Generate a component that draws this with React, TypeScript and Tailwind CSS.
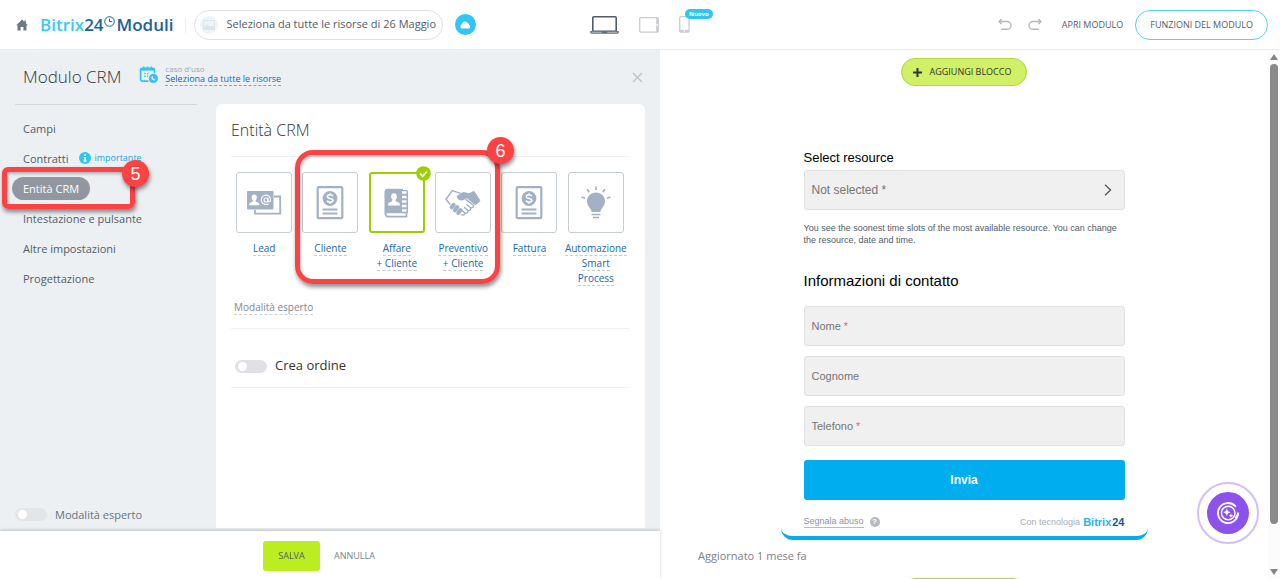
import React, { FC, ReactNode, useState } from "react";
import clsx from "clsx";

const BadgeNumber: FC<{ children: ReactNode; className?: string }> = ({
  children,
  className,
}) => (
  <span
    className={clsx(
      "absolute flex size-[27px] items-center justify-center rounded-full bg-[#fb4344] font-['Liberation_Sans',sans-serif] text-lg leading-none text-white shadow-[1px_3px_4px_rgba(0,0,0,0.45)]",
      className,
    )}
  >
    {children}
  </span>
);

const HomeIcon = () => (
  <svg width="12" height="12" viewBox="0 0 12 12" fill="#6f7883">
    <path d="M6 .4 8.4 2.7V1.4h1.5v2.8L11.8 6.2h-1.3v4.6q0 .6-.6.6H7.4V7.9H4.6v3.5H2.1q-.6 0-.6-.6V6.2H.2z" />
  </svg>
);

const ClockIcon = () => (
  <svg
    width="11"
    height="11"
    viewBox="0 0 11 11"
    fill="none"
    stroke="#1c6299"
    className="mb-1.5"
  >
    <circle cx="5.5" cy="5.5" r="4.8" />
    <path d="M5.5 2.6v3h2.7" />
  </svg>
);

const CalendarIcon = () => (
  <svg width="20" height="18" viewBox="0 0 20 18" fill="none">
    <path
      d="M9.5 15.2H3.2q-1.6 0-1.6-1.6V4q0-1.6 1.6-1.6h10.6q1.6 0 1.6 1.6v3"
      stroke="#36c2f0"
      strokeWidth="1.7"
    />
    <path d="M1.6 2.4h13.8v2.2H1.6z" fill="#36c2f0" />
    <path
      d="M4.8.4v2.6M8.6.4v2.6M12.3.4v2.6"
      stroke="#36c2f0"
      strokeWidth="1.6"
    />
    <path
      d="M5.2 6.8h1.5v1.4H5.2zM8.1 6.800h1.5v1.4H8.1zM5.200 9.600h1.500v1.400H5.200zM8.100 9.600h1v1.400h-1z"
      fill="#36c2f0"
    />
    <circle cx="14.4" cy="12.4" r="4.6" fill="#36c2f0" />
    <path d="M13.2 10.2v2.4l2.6 1.6" stroke="#fff" strokeWidth="1.2" />
  </svg>
);

const LaptopIcon = () => (
  <svg width="29" height="18" viewBox="0 0 29 18" fill="none">
    <rect
      x="2.8"
      y=".8"
      width="23.4"
      height="14.4"
      rx="1"
      stroke="#525c69"
      strokeWidth="1.6"
    />
    <path d="M.3 15h28.4v1.3q0 1.5-1.5 1.5H1.8q-1.5 0-1.5-1.5z" fill="#656f7b" />
    <path d="M1.6 16.3h10.2M17.2 16.3h10.2" stroke="#d5d8dc" strokeWidth=".7" />
  </svg>
);

const TabletIcon = () => (
  <svg width="20" height="16" viewBox="0 0 20 16" fill="none">
    <rect
      x=".7"
      y=".7"
      width="18.6"
      height="14.4"
      rx="1"
      stroke="#c9ccd1"
      strokeWidth="1.3"
    />
    <path d="M18.2 1v14" stroke="#c9ccd1" strokeWidth="2" />
    <circle cx="18.2" cy="8" r=".9" fill="#fff" />
  </svg>
);

const PhoneIcon = () => (
  <svg width="11" height="17" viewBox="0 0 11 17" fill="none">
    <rect
      x=".7"
      y=".7"
      width="9.4"
      height="15.4"
      rx="1"
      stroke="#c9ccd1"
      strokeWidth="1.3"
    />
    <path d="M1 14.9h9" stroke="#c9ccd1" strokeWidth="2" />
    <circle cx="5.4" cy="14.9" r=".8" fill="#fff" />
  </svg>
);

const UndoIcon: FC<{ flip?: boolean }> = ({ flip }) => (
  <svg
    width="14"
    height="13"
    viewBox="0 0 14 13"
    fill="none"
    stroke="#b4b9bf"
    strokeWidth="1.4"
    className={flip ? "-scale-x-100" : ""}
  >
    <path d="M1.4 3.5h7.700a3.900 3.900 0 0 1 0 7.800H3.200" />
    <path d="M3.500 1 1.200 3.500l2.300 2.500" />
  </svg>
);

const LeadIcon = () => (
  <svg width="36" height="26" viewBox="0 0 36 26" fill="none">
    <path
      d="M28 6.5h6.2V23.7H9V20"
      stroke="#a3b1c7"
      strokeWidth="1.8"
    />
    <rect x="1" y="1" width="26.5" height="18.5" rx="1" fill="#a3b1c7" />
    <path
      d="M8.2 4.6c1.7 0 2.7 1.2 2.6 3-.1 1.400-.6 2.300-1.100 2.800v1.300l2.800 1.100q1.100.5 1.100 2.500H2.900q0-2 1.100-2.500l2.800-1.100v-1.300c-.6-.5-1.100-1.400-1.100-2.800-.1-1.800.8-3 2.500-3z"
      fill="#fff"
    />
    <circle cx="20" cy="10" r="2" stroke="#fff" strokeWidth="1.1" />
    <path
      d="M22 7.800v2.700c0 2 2.600 1.700 2.600-.8a4.700 4.700 0 1 0-2 4"
      stroke="#fff"
      strokeWidth="1.100"
    />
  </svg>
);

const InvoiceIcon = () => (
  <svg width="28" height="34" viewBox="0 0 28 34" fill="none">
    <rect
      x="1.700"
      y="1.200"
      width="24.600"
      height="31"
      rx="1"
      stroke="#a3b1c7"
      strokeWidth="2.200"
    />
    <circle cx="14" cy="12.500" r="7.400" fill="#a3b1c7" />
    <path
      d="M16.800 10.200c-.5-1-1.500-1.400-2.800-1.400-1.500 0-2.700.6-2.700 1.800 0 2.700 5.600 1 5.600 3.700 0 1.300-1.300 1.900-2.900 1.900-1.400 0-2.500-.5-3-1.600M14 7.200v1.700M14 16.100v1.700"
      stroke="#fff"
      strokeWidth="1.500"
    />
    <path d="M6.500 23.500h15M6.500 27.500h15" stroke="#a3b1c7" strokeWidth="2" />
  </svg>
);

const ContactIcon = () => (
  <svg width="26" height="30" viewBox="0 0 26 30" fill="none">
    <path
      d="M1.500 3v23q0 2.600 2.600 2.600h18.400V25.500"
      stroke="#a3b1c7"
      strokeWidth="1.600"
    />
    <path
      d="M.7 3Q.7.7 3 .7h16v24.500H3.800q-1.800 0-1.800 1.400H.7z"
      fill="#a3b1c7"
    />
    <path
      d="M19 2h3.500q1.500 0 1.500 1.500V25.500H19z"
      fill="#a3b1c7"
    />
    <path
      d="M18 4.500h4.500M18 9h4.500M18 13.500h4.500M18 18h4.500M18 22.500h4.500"
      stroke="#fff"
      strokeWidth="2.600"
    />
    <path
      d="M10 5.300c1.900 0 3 1.300 2.900 3.200-.1 1.500-.6 2.500-1.200 3v1.800l3 1.100q1.300.6 1.300 3.200H4q0-2.600 1.300-3.200l3-1.100v-1.800c-.6-.5-1.100-1.500-1.200-3-.1-1.900 1-3.200 2.900-3.200z"
      fill="#fff"
    />
  </svg>
);

const HandshakeIcon = () => (
  <svg width="36" height="28" viewBox="0 0 36 28" fill="none">
    <path
      d="M15.500 4.400 7.200 1.600 1 10.300l4.200 5.200"
      stroke="#a3b1c7"
      strokeWidth="1.500"
    />
    <path
      d="M11.500 7.200 17 3.600q1.400-.9 3-.4l3.500 1q2.200-.2 4.400-1.900 1-.7 1.700.3l5.500 8.300q.5 1-.3 1.700l-3.600 3.200q-.9.600-1.900-.2l-7.500-6.300-3.400 1.600c-2.400 1.200-5.600.4-6.900-3.700z"
      fill="#a3b1c7"
    />
    <path
      d="m6.600 18.300 2-2.500M9.800 21.300l2.500-3.300M13.200 24l2.100-2.800"
      stroke="#a3b1c7"
      strokeWidth="4"
      strokeLinecap="round"
    />
    <path
      d="M16.600 25.700c1.600.9 3.500-.1 3.200-1.700 2 .7 3.600-.7 3-2.400 2.200.3 3.500-1.200 2.700-2.800 2.400.2 3.700-1.300 2.600-2.900L21 10.600M19.800 24l-2.600-2.500M22.800 21.600l-3.200-3M25.500 18.800l-3.500-3.100"
      stroke="#a3b1c7"
      strokeWidth="1.400"
      strokeLinecap="round"
    />
  </svg>
);

const BulbIcon = () => (
  <svg width="30" height="34" viewBox="0 0 30 34" fill="none">
    <path
      d="M15 6.600c5.200 0 9 3.800 9 8.700 0 3-1.300 4.800-2.800 6.600-1.100 1.300-1.600 2.500-1.800 4.100h-8.800c-.2-1.600-.7-2.800-1.800-4.100C7.300 20.100 6 18.300 6 15.300c0-4.900 3.800-8.700 9-8.700z"
      fill="#a3b1c7"
    />
    <path
      d="M10.500 28.500h9M11.800 31.500h6.400M15 .5v3.600M6.200 3.200l2 3M23.800 3.200l-2 3M.5 11l3.600 1.300M29.500 11l-3.600 1.300"
      stroke="#a3b1c7"
      strokeWidth="1.700"
    />
  </svg>
);

const entities = [
  { id: "lead", lines: ["Lead"], icon: <LeadIcon /> },
  { id: "client", lines: ["Cliente"], icon: <InvoiceIcon /> },
  { id: "deal", lines: ["Affare", "+ Cliente"], icon: <ContactIcon /> },
  { id: "quote", lines: ["Preventivo", "+ Cliente"], icon: <HandshakeIcon /> },
  { id: "invoice", lines: ["Fattura"], icon: <InvoiceIcon /> },
  {
    id: "smart",
    lines: ["Automazione", "Smart", "Process"],
    icon: <BulbIcon />,
  },
];

const menu = [
  "Campi",
  "Contratti",
  "Entità CRM",
  "Intestazione e pulsante",
  "Altre impostazioni",
  "Progettazione",
];

const Toggle: FC<{ id: string; className: string }> = ({ id, className }) => (
  <input
    id={id}
    type="checkbox"
    role="switch"
    className={clsx(
      "flex h-[13px] w-8 shrink-0 appearance-none items-center rounded-full px-[3px] before:size-[9px] before:rounded-full before:bg-white checked:justify-end checked:bg-[#2fc6f6]",
      className,
    )}
  />
);

const Header = () => (
  <header className="grid h-[50px] shrink-0 grid-cols-[1fr_auto_1fr] items-center border-b border-[#e9ebed] bg-white">
    <div className="flex items-center pl-4">
      <a href="#" aria-label="Home">
        <HomeIcon />
      </a>
      <a
        href="#"
        className="ml-3 flex items-center text-[17px] leading-6 font-semibold text-[#1c6299]"
      >
        <span className="text-[#3bc8f5]">Bitrix</span>24
        <ClockIcon />
        <span className="ml-0.5">Moduli</span>
      </a>
      <span className="ml-3 h-4 w-px bg-[#edeef0]" />
      <button className="ml-2 flex h-[30px] items-center gap-2 rounded-full border border-[#dfe0e3] pr-1.5 pl-[5px] text-[11px] whitespace-nowrap text-[#525c69]">
        <span className="flex size-[18px] items-center justify-center rounded-full bg-[#edf5f9]">
          <svg width="12" height="10" viewBox="0 0 12 10" fill="#dbe5ec">
            <path d="M0 0h12v10H0zM1 1v6l3-3 3 3 2-1.500 2 2V1z" fillRule="evenodd" />
          </svg>
        </span>
        Seleziona da tutte le risorse di 26 Maggio
      </button>
      <button
        aria-label="Cloud"
        className="ml-3 flex size-[21px] items-center justify-center rounded-full bg-[#2fc6f6]"
      >
        <svg width="11" height="8" viewBox="0 0 11 8" fill="#fff">
          <path d="M2.400 7.600a2.200 2.200 0 0 1-.5-4.300A3.200 3.200 0 0 1 7.800 2a2 2 0 0 1 1.200 1.800 2 2 0 0 1-.3 3.800z" />
        </svg>
      </button>
    </div>

    <div className="flex items-center gap-5">
      <button aria-label="Desktop">
        <LaptopIcon />
      </button>
      <button aria-label="Tablet">
        <TabletIcon />
      </button>
      <button aria-label="Mobile" className="relative">
        <PhoneIcon />
        <span className="absolute -top-[7px] left-1.5 rounded-full bg-[#2fc6f6] px-1 text-[6px] leading-[10px] font-bold text-white">
          Nuovo
        </span>
      </button>
    </div>

    <div className="flex items-center justify-end pr-3 text-[9px] font-medium text-[#525c69]">
      <button aria-label="Annulla modifica">
        <UndoIcon />
      </button>
      <button aria-label="Ripeti modifica" className="ml-4">
        <UndoIcon flip />
      </button>
      <button className="ml-5">APRI MODULO</button>
      <button className="ml-3 h-[30px] rounded-full border border-[#55d0f8] px-3.5">
        FUNZIONI DEL MODULO
      </button>
    </div>
  </header>
);

const Sidebar = () => (
  <div className="flex w-[216px] shrink-0 flex-col pb-2">
    <nav className="mr-[19px] ml-[15px] border-t border-[#d3d7db] pt-2">
      {menu.map((item) => (
        <div key={item} className="relative flex h-[30px] items-center">
          <a
            href="#"
            className={clsx(
              "-ml-[3px] rounded-full px-[11px] text-[11px] leading-[23px]",
              item === "Entità CRM"
                ? "bg-[#9097a1] text-white"
                : "text-[#525c69]",
            )}
          >
            {item}
          </a>
          {item === "Contratti" && (
            <span className="flex items-center gap-[3px] text-[9px] text-[#1ba5dc]">
              <svg width="12" height="12" viewBox="0 0 12 12">
                <circle cx="6" cy="6" r="6" fill="#2fc6f6" />
                <path
                  d="M5.200 2.200h1.700v1.600H5.200zM4.700 4.900h2.200v3.700h.7v1.100H4.500V8.600h.7V6h-.5z"
                  fill="#fff"
                />
              </svg>
              importante
            </span>
          )}
          {item === "Entità CRM" && (
            <div className="pointer-events-none absolute -top-1.5 -left-[13px] z-10 h-[42px] w-[133px] rounded-md border-[5px] border-[#fb4344] shadow-[1px_3px_4px_rgba(0,0,0,0.45),inset_1px_2px_3px_rgba(0,0,0,0.25)]">
              <BadgeNumber className="-top-3 -right-[19px]">5</BadgeNumber>
            </div>
          )}
        </div>
      ))}
    </nav>
    <div className="mt-auto flex items-center gap-2 pl-[15px]">
      <Toggle id="expert" className="bg-[#e3e5e7]" />
      <label htmlFor="expert" className="text-[11px] text-[#6a737f]">
        Modalità esperto
      </label>
    </div>
  </div>
);

const EntityPanel = () => {
  const [selected, setSelected] = useState<string>("deal");

  return (
    <section className="mr-[15px] mb-[3px] min-w-0 flex-1 rounded-t-md bg-white pr-4 pl-[15px]">
      <h2 className="flex h-[52px] items-center text-base font-light text-[#333]">
        Entità CRM
      </h2>
      <div className="relative grid grid-cols-6 border-t border-[#eef0f1] pt-[15px]">
        {entities.map((entity) => (
          <button
            key={entity.id}
            onClick={() => setSelected(entity.id)}
            className="flex flex-col items-center text-[10px] text-[#2067b0]"
          >
            <span
              className={clsx(
                "relative mb-2 flex h-[61px] w-14 items-center justify-center rounded-[3px]",
                selected === entity.id
                  ? "border-2 border-[#9dcf00]"
                  : "border border-[#c6cdd3]",
              )}
            >
              {entity.icon}
              {selected === entity.id && (
                <svg
                  width="15"
                  height="15"
                  viewBox="0 0 15 15"
                  fill="none"
                  className="absolute -top-2 -right-2"
                >
                  <circle cx="7.500" cy="7.500" r="7.300" fill="#9dcf00" />
                  <path d="m4 7.500 2.600 2.600L11 5.500" stroke="#fff" strokeWidth="1.800" />
                </svg>
              )}
            </span>
            {entity.lines.map((line) => (
              <span
                key={line}
                className="border-b border-dashed border-[#c3cad2] leading-[14px] whitespace-nowrap"
              >
                {line}
              </span>
            ))}
          </button>
        ))}
        <div className="pointer-events-none absolute -top-[7px] left-[64px] h-[134px] w-[205px] rounded-[18px] border-[5px] border-[#fb4344] shadow-[1px_3px_4px_rgba(0,0,0,0.45),inset_1px_2px_3px_rgba(0,0,0,0.25)]">
          <BadgeNumber className="-top-[18px] -right-[19px]">6</BadgeNumber>
        </div>
      </div>
      <div className="flex h-[43px] items-center border-b border-[#eef0f1] pl-[3px]">
        <button className="border-b border-dashed border-[#cdd2d7] text-[10px] leading-[14px] text-[#80868e]">
          Modalità esperto
        </button>
      </div>
      <div className="flex h-[59px] items-center gap-2 border-b border-[#eef0f1] pt-4 pl-1">
        <Toggle id="order" className="bg-[#dfe1e5]" />
        <label htmlFor="order" className="text-[13px] text-[#333]">
          Crea ordine
        </label>
      </div>
    </section>
  );
};

const fields = [
  { id: "name", label: "Nome", required: true },
  { id: "surname", label: "Cognome", required: false },
  { id: "phone", label: "Telefono", required: true },
];

const FormPreview = () => (
  <main className="relative flex min-w-0 overflow-hidden bg-white">
    <div className="flex min-w-0 flex-1 flex-col items-center pt-2">
      <button className="flex h-7 w-[126px] shrink-0 items-center justify-center gap-2 rounded-full border border-[#b3d53c] bg-[#d0f065] pr-1 text-[9px] font-medium whitespace-nowrap text-[#333]">
        <svg
          width="9"
          height="9"
          viewBox="0 0 9 9"
          stroke="#333"
          strokeWidth="2"
        >
          <path d="M4.500 0v9M0 4.500h9" />
        </svg>
        AGGIUNGI BLOCCO
      </button>
      <form className="mt-[62px] w-full max-w-[367px] shrink-0 rounded-b-xl border-b-4 border-[#00aeef] px-[23px] pb-1.5 font-['Liberation_Sans',sans-serif]">
        <h3 className="text-[13px] leading-5 text-black">Select resource</h3>
        <button
          type="button"
          className="mt-0.5 flex h-10 w-full items-center justify-between rounded-[3px] border border-[#e2e2e2] bg-[#f0f0f0] pr-3 pl-[7px] text-[12px] text-[#757575]"
        >
          Not selected *
          <svg
            width="8"
            height="12"
            viewBox="0 0 8 12"
            fill="none"
            stroke="#525c69"
            strokeWidth="1.400"
          >
            <path d="m1 .8 5.500 5.200L1 11.200" />
          </svg>
        </button>
        <p className="mt-3 text-[9px] leading-3 text-[#525c69]">
          You see the soonest time slots of the most available resource. You can
          change the resource, date and time.
        </p>
        <h3 className="mt-6 mb-3.5 text-[15px] leading-[22px] text-black">
          Informazioni di contatto
        </h3>
        <div className="flex flex-col gap-2.5">
          {fields.map((field) => (
            <div key={field.id} className="relative h-10">
              <input
                id={field.id}
                className="peer h-full w-full rounded-[3px] border border-[#e2e2e2] bg-[#f0f0f0] px-2 text-[12px] text-black outline-none"
                placeholder=" "
              />
              <label
                htmlFor={field.id}
                className="absolute inset-y-0 left-2 flex items-center gap-[3px] text-[11px] text-[#757575] peer-[:not(:placeholder-shown)]:hidden"
              >
                {field.label}
                {field.required && <span className="text-[#f0606a]">*</span>}
              </label>
            </div>
          ))}
        </div>
        <button
          type="button"
          className="mt-3.5 h-10 w-full rounded-[3px] bg-[#00aeef] text-[12px] font-bold text-white"
        >
          Invia
        </button>
        <div className="mt-3.5 flex h-4 items-center justify-between text-[9px] leading-4 text-[#a8adb4]">
          <div className="flex items-center gap-1.5">
            <a
              href="#"
              className="border-b border-[#b9bdc3] leading-[11px] text-[#8d939b]"
            >
              Segnala abuso
            </a>
            <button
              type="button"
              aria-label="Aiuto"
              className="flex size-2.5 items-center justify-center rounded-full bg-[#b4b9c0] text-[8px] font-bold text-white"
            >
              ?
            </button>
          </div>
          <span className="flex items-center gap-[3px]">
            Con tecnologia
            <a
              href="#"
              className="flex gap-px text-[11px] font-bold text-[#14588f]"
            >
              <span className="text-[#1fb4ee]">Bitrix</span>
              <span>24</span>
            </a>
          </span>
        </div>
      </form>
      <p className="mt-2 mb-3.5 self-start pl-[38px] text-[11px] leading-4 text-[#7d8186]">
        Aggiornato 1 mese fa
      </p>
      <button
        aria-label="Aggiungi blocco"
        className="h-7 w-[126px] shrink-0 rounded-full border border-[#b3d53c] bg-[#d0f065]"
      />
    </div>

    <div className="flex w-3 shrink-0 flex-col items-center bg-[#fcfcfc] pt-1 pb-1">
      <svg width="8" height="6" viewBox="0 0 8 6" fill="#858585">
        <path d="M4 0 8 6H0z" />
      </svg>
      <div className="mt-1 flex-1">
        <div className="h-[91%] w-2 rounded-full bg-[#8a8a8a]" />
      </div>
      <svg width="8" height="6" viewBox="0 0 8 6" fill="#858585">
        <path d="M4 6 8 0H0z" />
      </svg>
    </div>

    <button
      aria-label="CoPilot"
      className="absolute right-[21px] bottom-[35px] flex size-[62px] items-center justify-center rounded-full border-2 border-[#d5bff8] bg-white"
    >
      <span className="flex size-[42px] items-center justify-center rounded-full bg-[#8e52ec]">
        <svg width="24" height="24" viewBox="0 0 24 24" fill="none" stroke="#fff">
          <path
            d="M19.300 5.200A10 10 0 1 0 22 12.500"
            strokeWidth="1.900"
            strokeLinecap="round"
          />
          <path
            d="M22 12.500a8.500 8.500 0 0 1-2.200 4"
            strokeWidth="1.900"
            strokeLinecap="round"
          />
          <circle cx="12.200" cy="12" r="6.800" strokeWidth="1.400" />
          <path
            d="M10.800 7.300q.5 3.400 3.900 3.900-3.400.5-3.900 3.900-.5-3.400-3.900-3.900 3.400-.5 3.900-3.900zM15 12.400q.3 2 2.300 2.300-2 .3-2.300 2.300-.3-2-2.300-2.300 2-.3 2.300-2.300z"
            fill="#fff"
            stroke="none"
          />
        </svg>
      </span>
    </button>
  </main>
);

const App = () => {
  return (
    <div className="flex h-screen flex-col overflow-hidden bg-white font-['Open_Sans',sans-serif]">
      <Header />
      <div className="grid min-h-0 flex-1 grid-cols-[33fr_31fr]">
        <aside className="flex min-h-0 min-w-0 flex-col bg-[#ecf0f3]">
          <div className="flex h-[54px] shrink-0 items-center pr-[17px] pl-[23px]">
            <h1 className="text-[17px] font-light text-[#333]">Modulo CRM</h1>
            <div className="ml-[18px] flex items-center gap-1.5 pb-1">
              <CalendarIcon />
              <div className="flex flex-col items-start">
                <span className="text-[8px] leading-[9px] text-[#a0a7b0]">
                  caso d'uso
                </span>
                <a
                  href="#"
                  className="border-b border-dashed border-[#7aa6d6] text-[9px] leading-[12px] text-[#2067b0]"
                >
                  Seleziona da tutte le risorse
                </a>
              </div>
            </div>
            <button aria-label="Chiudi" className="ml-auto">
              <svg
                width="11"
                height="11"
                viewBox="0 0 11 11"
                stroke="#c3c7cc"
                strokeWidth="1.600"
              >
                <path d="m1 1 9 9M10 1l-9 9" />
              </svg>
            </button>
          </div>
          <div className="flex min-h-0 flex-1">
            <Sidebar />
            <EntityPanel />
          </div>
          <footer className="z-10 flex h-12 shrink-0 items-center justify-center bg-white pt-0.5 text-[9px] font-medium shadow-[0_-1px_3px_rgba(0,0,0,0.2)]">
            <button className="h-[30px] w-[57px] rounded-[3px] bg-[#bbed21] text-[#535c69]">
              SALVA
            </button>
            <button className="w-[77px] pl-3.5 text-left text-[#7a828c]">
              ANNULLA
            </button>
          </footer>
        </aside>
        <FormPreview />
      </div>
    </div>
  );
};

export default App;
